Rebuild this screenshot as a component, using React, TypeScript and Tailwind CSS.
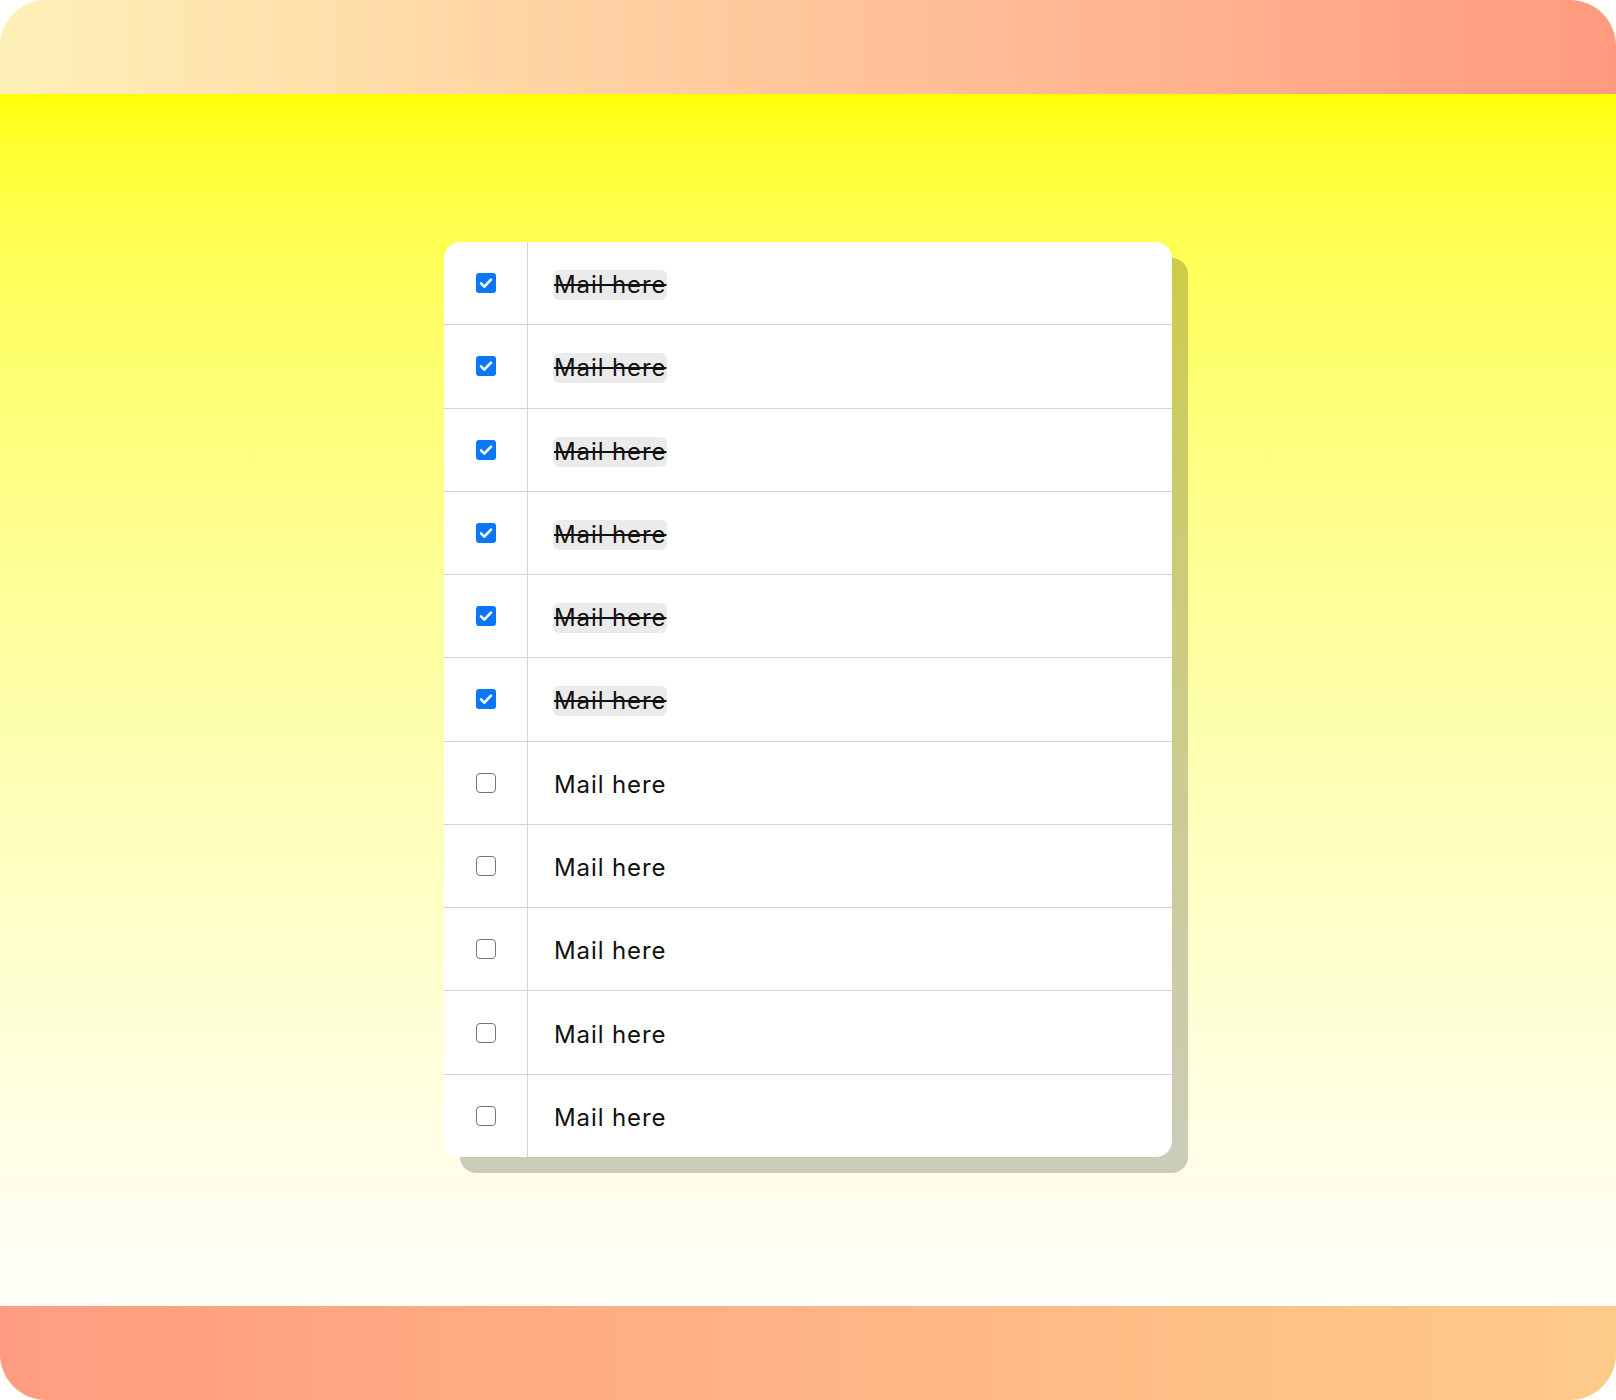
const mails = [
  { text: "Mail here", done: true },
  { text: "Mail here", done: true },
  { text: "Mail here", done: true },
  { text: "Mail here", done: true },
  { text: "Mail here", done: true },
  { text: "Mail here", done: true },
  { text: "Mail here", done: false },
  { text: "Mail here", done: false },
  { text: "Mail here", done: false },
  { text: "Mail here", done: false },
  { text: "Mail here", done: false },
];

function Check({ checked }: { checked: boolean }) {
  if (!checked) {
    return <span className="block w-5 h-5 rounded-[4px] border border-[#767676] bg-white" />;
  }
  return (
    <span className="flex items-center justify-center w-5 h-5 rounded-[3px] bg-[#0b77f8]">
      <svg width="16" height="16" viewBox="0 0 16 16" fill="none">
        <path d="M3 8.4l3.3 3.3L13 4.6" stroke="white" strokeWidth="2.6" strokeLinecap="round" strokeLinejoin="round" />
      </svg>
    </span>
  );
}

export default function App() {
  return (
    <div className="w-[1616px] h-[1400px] bg-white font-['Inter',sans-serif]">
      <div className="h-full rounded-[46px] overflow-hidden flex flex-col">
        {/* top band */}
        <div className="h-[94px] bg-linear-to-r from-[#fdf0b6] to-[#ff9a7f]" />

        {/* list area */}
        <div className="flex-1 bg-linear-to-b from-[#ffff00] to-[#fffffa] flex justify-center pt-[148px]">
          <div className="w-[728px] h-[915px] bg-white rounded-2xl shadow-[16px_16px_0_rgba(0,0,0,0.2)] overflow-hidden flex flex-col">
            {mails.map((m, i) => (
              <div key={i} className="flex-1 flex border-b border-[#d4d4d4] last:border-b-0">
                <div className="w-[84px] border-r border-[#d4d4d4] flex items-center justify-center">
                  <Check checked={m.done} />
                </div>
                <div className="flex-1 flex items-center pl-[25px] pt-[4px]">
                  {m.done ? (
                    <span className="px-px leading-[30px] text-[24px] tracking-[0.9px] text-[#111] line-through decoration-2 bg-[#ebebeb] rounded-md">
                      {m.text}
                    </span>
                  ) : (
                    <span className="px-px leading-[30px] text-[24px] tracking-[0.9px] text-[#111]">{m.text}</span>
                  )}
                </div>
              </div>
            ))}
          </div>
        </div>

        {/* bottom band */}
        <div className="h-[94px] bg-linear-to-r from-[#ff9c80] to-[#fecb89]" />
      </div>
    </div>
  );
}
